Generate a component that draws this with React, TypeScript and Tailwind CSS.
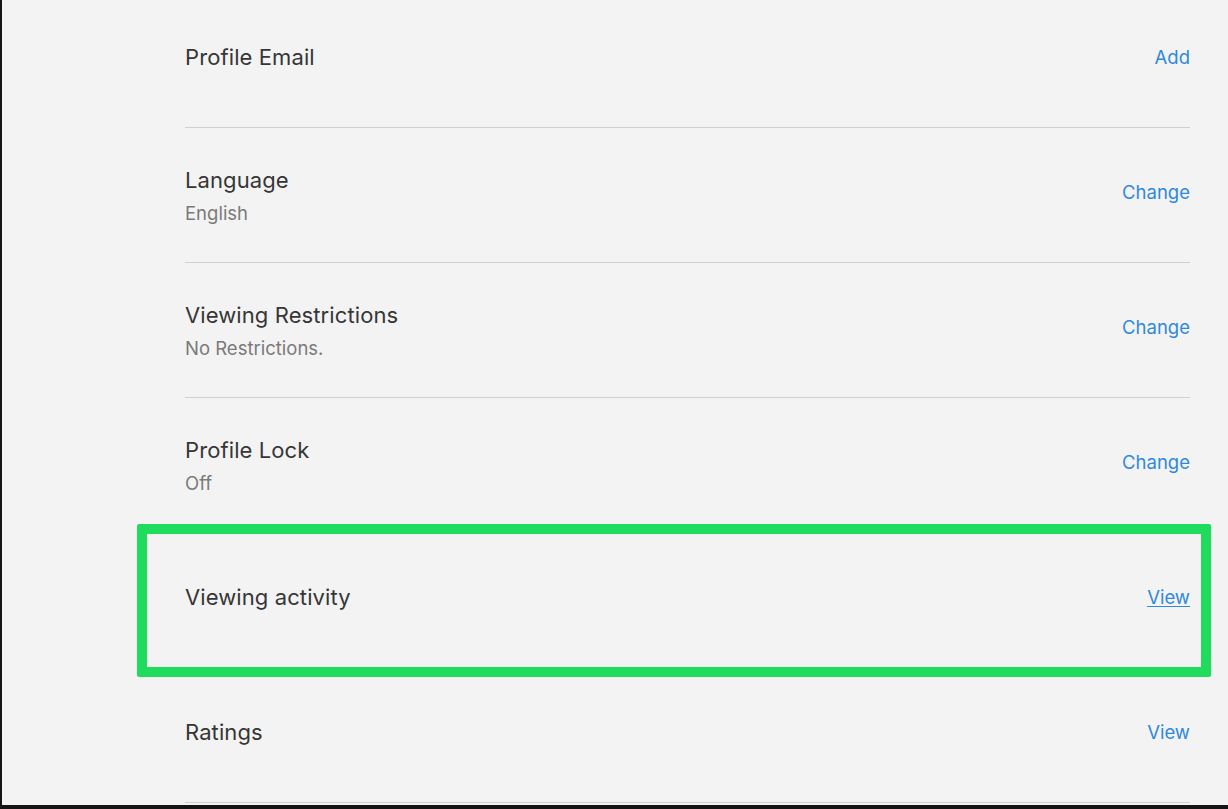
import React from "react";

type Row = { title: string; sub?: string; action: string; underline?: boolean };

const rows: Row[] = [
  { title: "Profile Email", action: "Add" },
  { title: "Language", sub: "English", action: "Change" },
  { title: "Viewing Restrictions", sub: "No Restrictions.", action: "Change" },
  { title: "Profile Lock", sub: "Off", action: "Change" },
  { title: "Viewing activity", action: "View", underline: true },
  { title: "Ratings", action: "View" },
];

export default function App() {
  return (
    <div
      className="relative w-[1228px] h-[809px] overflow-hidden bg-[#f3f3f3] border-l-2 border-b-4 border-[#141414]"
      style={{ fontFamily: "Inter, Roboto, Arial, sans-serif" }}
    >
      <div className="ml-[183px] w-[1005px]">
        {rows.map((r, i) => (
          <div
            key={r.title}
            className={`flex items-center justify-between border-b border-[#d0d0d0] ${
              i === 0 ? "h-[128px] pb-[14px]" : "h-[135px] pb-[6px]"
            }`}
          >
            <div className={`flex flex-col ${r.sub ? "mt-[6px]" : ""}`}>
              <span className="text-[22px] leading-[28px] tracking-[0.1px] text-[#363636]">{r.title}</span>
              {r.sub && <span className="mt-[7px] text-[18.5px] leading-[24px] text-[#7a7a7a]">{r.sub}</span>}
            </div>
            <a
              href="#"
              className={`text-[18.5px] leading-[24px] text-[#2f89dc] ${r.underline ? "underline underline-offset-2" : ""}`}
            >
              {r.action}
            </a>
          </div>
        ))}
      </div>

      {/* highlight annotation */}
      <div className="absolute left-[135px] top-[524px] w-[1074px] h-[153px] border-[10px] border-[#1fdc5d] rounded-[2px] pointer-events-none" />
    </div>
  );
}
